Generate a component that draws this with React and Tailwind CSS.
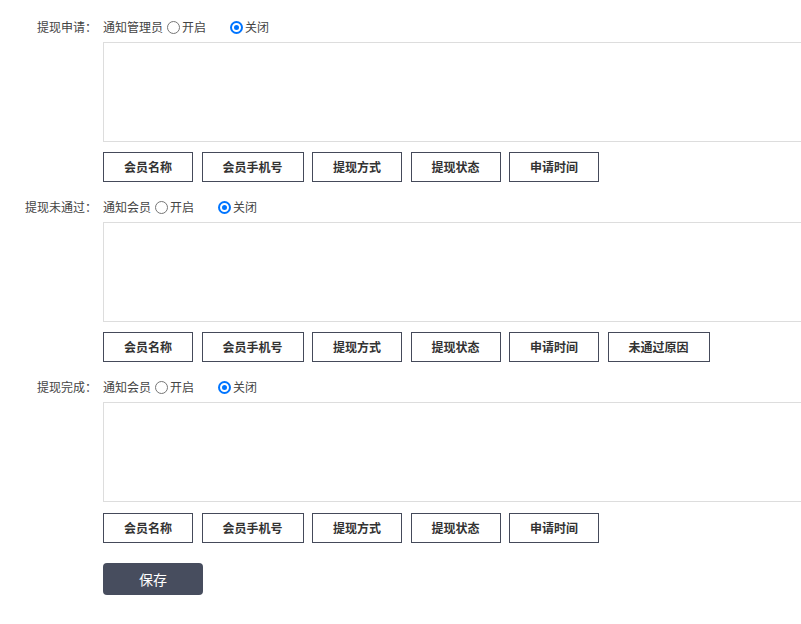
import React from "react";

const font = { fontFamily: '"Microsoft YaHei", "Noto Sans CJK SC", "Noto Sans", sans-serif' };

function Radio({ checked, label }) {
  return (
    <span className="flex items-center">
      <span
        className={
          checked
            ? "w-[13px] h-[13px] rounded-full bg-[#0075ff] flex items-center justify-center"
            : "w-[13px] h-[13px] rounded-full border border-[#767676] bg-white"
        }
      >
        {checked && <span className="w-[9px] h-[9px] rounded-full border-[2px] border-white bg-[#0075ff]" />}
      </span>
      <span className="ml-[2px]">{label}</span>
    </span>
  );
}

function Section({ label, who, tags, last }) {
  return (
    <div className="flex">
      <div className="w-[97px] shrink-0 text-right text-[12px] leading-[20px] text-[#444]">{label}</div>
      <div className="ml-[6px] flex flex-col">
        <div className="flex items-center h-[20px] text-[12px] text-[#444]">
          <span>{who}</span>
          <span className="ml-[4px]"><Radio label="开启" /></span>
          <span className="ml-[24px]"><Radio checked label="关闭" /></span>
        </div>
        <div className="mt-[5px] w-[720px] h-[100px] border border-[#dddddd] bg-white" />
        <div className={(last ? "mt-[11px]" : "mt-[10px]") + " flex gap-[8.5px]"}>
          {tags.map((t) => (
            <div
              key={t}
              className={
                (t.length > 4 ? "w-[102px]" : "w-[90px]") +
                " h-[30px] border border-[#454a5a] flex items-center justify-center text-[12px] font-bold text-[#333]"
              }
            >
              {t}
            </div>
          ))}
        </div>
      </div>
    </div>
  );
}

export default function App() {
  const base = ["会员名称", "会员手机号", "提现方式", "提现状态", "申请时间"];
  return (
    <div className="w-[801px] h-[624px] overflow-hidden bg-white" style={font}>
      <div className="pt-[17px] flex flex-col gap-[15px]">
        <Section label="提现申请：" who="通知管理员" tags={base} />
        <Section label="提现未通过：" who="通知会员" tags={[...base, "未通过原因"]} />
        <Section label="提现完成：" who="通知会员" tags={base} last />
      </div>
      <div className="ml-[103px] mt-[20px] w-[100px] h-[32px] rounded-[4px] bg-[#474d5e] text-white text-[14px] flex items-center justify-center">
        保存
      </div>
    </div>
  );
}
